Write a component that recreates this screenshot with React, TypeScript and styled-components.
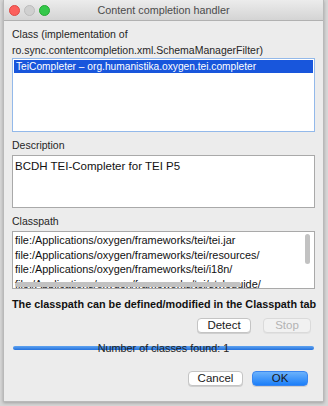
import React from "react";
import styled, { createGlobalStyle } from "styled-components";

const Global = createGlobalStyle`
  html, body { margin: 0; padding: 0; }
  body {
    width: 328px; height: 406px; overflow: hidden;
    background: #d9d9d9;
    font-family: "Liberation Sans", Arial, sans-serif;
  }
`;

const Screen = styled.div`
  width: 328px; height: 406px;
  display: flex; flex-direction: column; align-items: flex-start;
  padding: 0 0 0 3px; box-sizing: border-box;
  background: #d6d6d6;
`;

const Dialog = styled.div`
  width: 321px; height: 402px;
  background: #ececec;
  border: 1px solid #b9b9b9; border-top: none;
  box-sizing: border-box;
  display: flex; flex-direction: column;
  box-shadow: 0 1px 3px rgba(0,0,0,0.25);
`;

const TitleBar = styled.div`
  height: 21px; flex: none;
  background: linear-gradient(#ececec, #d4d4d4);
  border-bottom: 1px solid #b1b1b1;
  display: flex; align-items: center;
  padding-left: 5px; box-sizing: border-box;
  position: relative;
`;

const Light = styled.span<{ $c: string; $b: string }>`
  width: 11px; height: 11px; border-radius: 50%;
  background: ${p => p.$c}; border: 1px solid ${p => p.$b};
  box-sizing: border-box; margin-right: 4px;
`;

const Title = styled.div`
  position: absolute; left: 0; right: 0; top: 4px;
  text-align: center; font-size: 10.8px; color: #4b4b4b;
`;

const Body = styled.div`
  flex: 1; display: flex; flex-direction: column;
  padding: 5px 8px 0 8px;
`;

const Label = styled.div`
  font-size: 10.5px; color: #262626; line-height: 16px;
`;

const Box = styled.div<{ $h: number; $focus?: boolean; $mt?: number }>`
  height: ${p => p.$h}px; background: #fff;
  border: 1px solid ${p => (p.$focus ? "#93b9ea" : "#a9a9a9")};
  box-sizing: border-box; margin-top: ${p => p.$mt ?? 0}px;
  margin-bottom: 5px; position: relative; overflow: hidden;
  padding: 1px;
`;

const SelRow = styled.div`
  background: #1856dc; color: #fff; font-size: 10.2px;
  height: 13px; line-height: 13px; padding-left: 2px;
  white-space: nowrap;
`;

const DescText = styled.div`
  font-size: 11.5px; color: #111; padding: 2px 1px; line-height: 14px;
`;

const PathList = styled.div`
  font-size: 10.9px; color: #111; line-height: 14.5px;
  padding: 0 1px; white-space: nowrap;
`;

const VThumb = styled.div`
  position: absolute; right: 4px; top: 2px;
  width: 5px; height: 30px; border-radius: 3px; background: #c2c2c2;
`;

const HThumb = styled.div`
  position: absolute; left: 2px; bottom: 1px;
  width: 226px; height: 5px; border-radius: 3px; background: #c2c2c2;
`;

const Note = styled.div`
  font-size: 10.8px; font-weight: bold; color: #111;
  margin-top: 4px; white-space: nowrap;
`;

const ButtonRow = styled.div<{ $mt: number; $gap: number; $pr: number }>`
  display: flex; justify-content: flex-end; gap: ${p => p.$gap}px;
  margin-top: ${p => p.$mt}px; padding-right: ${p => p.$pr}px;
`;

const Button = styled.button<{ $w: number; $kind?: "default" | "disabled" | "primary" }>`
  width: ${p => p.$w}px; height: 15px; padding: 0;
  font-family: inherit; font-size: 11.5px; line-height: 13px;
  border-radius: 4px; box-sizing: border-box;
  border: 1px solid ${p => (p.$kind === "primary" ? "#3a86f0" : p.$kind === "disabled" ? "#dadada" : "#c4c4c4")};
  background: ${p =>
    p.$kind === "primary"
      ? "linear-gradient(#6cb2fb, #1c7ff9)"
      : p.$kind === "disabled" ? "#f1f1f1" : "#ffffff"};
  color: ${p => (p.$kind === "disabled" ? "#b3b3b3" : "#1a1a1a")};
  box-shadow: 0 1px 0 rgba(0,0,0,${p => (p.$kind === "disabled" ? 0.04 : 0.12)});
`;

const Progress = styled.div`
  position: relative; height: 12px; margin-top: 9px;
  display: flex; align-items: center; justify-content: center;
`;

const Bar = styled.div`
  position: absolute; left: 1px; right: 1px; top: 4px; height: 4px;
  border-radius: 2px; background: linear-gradient(#5fa3f0, #2472de);
`;

const BarText = styled.span`
  position: relative; font-size: 10.8px; color: #222; line-height: 12px;
`;

export default function App() {
  return (
    <Screen>
      <Global />
      <Dialog>
        <TitleBar>
          <Light $c="#fc605c" $b="#de4a45" />
          <Light $c="#d0d0d0" $b="#bcbcbc" />
          <Light $c="#34c84a" $b="#26a934" />
          <Title>Content completion handler</Title>
        </TitleBar>
        <Body>
          <Label>Class (implementation of<br />ro.sync.contentcompletion.xml.SchemaManagerFilter)</Label>
          <Box $h={74} $focus>
            <SelRow>TeiCompleter – org.humanistika.oxygen.tei.completer</SelRow>
          </Box>
          <Label>Description</Label>
          <Box $h={53} $mt={2}>
            <DescText>BCDH TEI-Completer for TEI P5</DescText>
          </Box>
          <Label>Classpath</Label>
          <Box $h={58} $mt={2}>
            <PathList>
              file:/Applications/oxygen/frameworks/tei/tei.jar<br />
              file:/Applications/oxygen/frameworks/tei/resources/<br />
              file:/Applications/oxygen/frameworks/tei/i18n/<br />
              file:/Applications/oxygen/frameworks/tei/styleguide/
            </PathList>
            <VThumb />
            <HThumb />
          </Box>
          <Note>The classpath can be defined/modified in the Classpath tab</Note>
          <ButtonRow $mt={8} $gap={12} $pr={4}>
            <Button $w={54}>Detect</Button>
            <Button $w={48} $kind="disabled">Stop</Button>
          </ButtonRow>
          <Progress>
            <Bar />
            <BarText>Number of classes found: 1</BarText>
          </Progress>
          <ButtonRow $mt={17} $gap={9} $pr={7}>
            <Button $w={55}>Cancel</Button>
            <Button $w={56} $kind="primary">OK</Button>
          </ButtonRow>
        </Body>
      </Dialog>
    </Screen>
  );
}
